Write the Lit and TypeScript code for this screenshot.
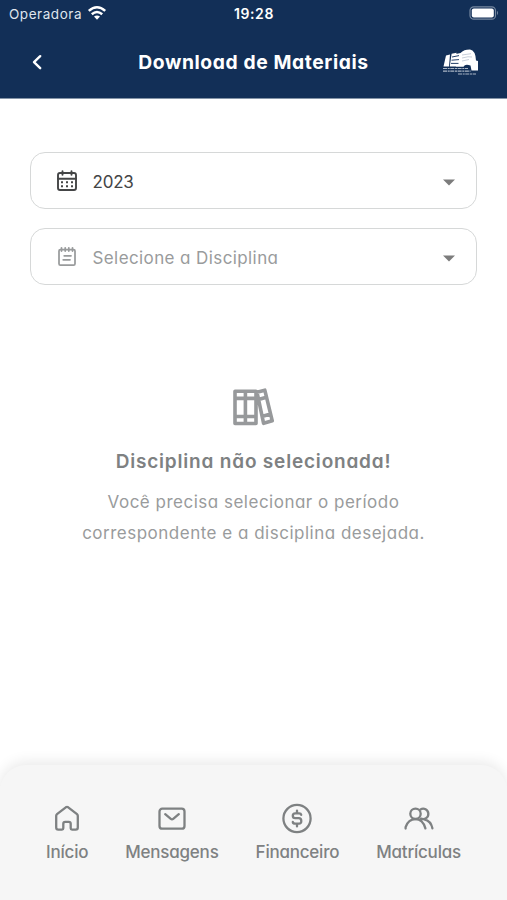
import { LitElement, html, css, svg } from "lit";
import { customElement, property } from "lit/decorators.js";

const icons = {
  calendar: svg`<g fill="none" stroke="#444546" stroke-width="1.9" stroke-linecap="round" stroke-linejoin="round">
    <rect x="2" y="3" width="18" height="17" rx="2"/><path d="M2 8.8H20M6.5 1.2V4.8M15.5 1.2V4.8"/></g>
    <path fill="#444546" d="M5 11.3h2v1.9h-2zM10 11.3h2v1.9h-2zM15 11.3h2v1.9h-2zM5 15.3h2v1.9h-2zM10 15.3h2v1.9h-2zM15 15.3h2v1.9h-2z"/>`,
  notes: svg`<g fill="none" stroke="#999b9c" stroke-width="1.75" stroke-linecap="round" stroke-linejoin="round">
    <rect x="3" y="3.6" width="16" height="15.6" rx="1.4"/><path d="M5.5 1.8V5M9.2 1.8V5M12.8 1.8V5M16.5 1.8V5M8.2 9.8H15M7.2 13.8H14"/></g>`,
};

@customElement("select-field")
export class SelectField extends LitElement {
  @property() icon: "calendar" | "notes" = "calendar";
  @property() text = "";
  @property({ type: Boolean }) placeholder = false;
  static styles = css`
    :host { display: block; }
    .field { box-sizing: border-box; height: 57px; border: 1.5px solid #d6d8d8; border-radius: 15px; display: flex; align-items: center; padding: 0 21px 0 25px; }
    .icon { width: 22px; height: 22px; margin-right: 14.5px; flex: none; }
    .value { flex: 1; font-size: 17px; line-height: 24px; color: #444546; padding-top: 3px; letter-spacing: -0.2px; }
    .hint { color: #999b9c; letter-spacing: 0.4px; }
    .arrow { width: 12px; height: 7px; margin-top: 3px; }
  `;
  render() {
    return html`<div class="field">
      <svg class="icon" viewBox="0 0 22 22">${icons[this.icon]}</svg>
      <span class="value ${this.placeholder ? "hint" : ""}">${this.text}</span>
      <svg class="arrow" viewBox="0 0 12 7"><path d="M0 .5H12L6 6.5Z" fill="#7c7c7c"/></svg>
    </div>`;
  }
}

const tabs = [
  { id: "home", label: "Início", icon: svg`<path d="M4.2 11.8Q4.2 10.8 5 10.1L13.8 3.3Q15 2.5 16.2 3.3L25 10.1Q25.8 10.8 25.8 11.8V23.5Q25.8 25.6 23.7 25.6H20Q18.7 25.6 18.7 24.3V19.7Q18.7 17.8 16.8 17.8H13.2Q11.3 17.8 11.3 19.7V24.3Q11.3 25.6 10 25.6H6.3Q4.2 25.6 4.2 23.5Z"/>` },
  { id: "mail", label: "Mensagens", icon: svg`<rect x="2.5" y="4.7" width="25" height="20" rx="2.8"/><path d="M8.2 10.2L13.8 14.9Q15 15.9 16.2 14.9L21.8 10.2"/>` },
  { id: "money", label: "Financeiro", icon: svg`<circle cx="15" cy="14.5" r="13.6"/><path d="M19.2 10.8Q18.9 9.3 17.2 9.3H13.2Q10.8 9.3 10.8 11.7T13.2 14.2H16.8Q19.3 14.2 19.3 17T16.8 19.6H13.2Q11 19.6 10.8 18M15 6.6V9.3M15 19.6V22.4"/>` },
  { id: "people", label: "Matrículas", icon: svg`<circle cx="11.5" cy="9.8" r="5.2"/><path d="M1.6 24.5V23.2Q4.3 15.2 11.5 15.2T21.4 24.3M16.5 5.4A5.2 5.2 0 1 1 17 14.6M20.2 15.3Q27 16.8 28.4 24.3"/>` },
];

@customElement("app-root")
export class AppRoot extends LitElement {
  static styles = css`
    :host { display: flex; flex-direction: column; height: 900px; width: 507px; overflow: hidden; background: #fff; font-family: Inter, "Open Sans", sans-serif; font-feature-settings: "cv11"; }
    svg { display: block; overflow: visible; }
    header { height: 99px; background: #122f57; color: #fff; flex: none; border-bottom: 1px solid #8494a7; box-sizing: border-box; }
    .status { height: 27px; display: grid; grid-template-columns: 1fr auto 1fr; align-items: center; padding: 0 8px 0 9px; font-feature-settings: normal; }
    .carrier { display: flex; align-items: center; gap: 6px; font-size: 13.5px; letter-spacing: 0.55px; color: #dfe5ed; }
    .wifi { width: 18px; height: 14px; margin-top: -2px; }
    .time { font-size: 14px; font-weight: 600; letter-spacing: 0.6px; }
    .battery { width: 30px; height: 14px; justify-self: end; margin-top: -1px; }
    .bar { height: 70px; display: grid; grid-template-columns: 60px 1fr 60px; align-items: center; padding: 0 28px; }
    .back { width: 18px; height: 18px; }
    .title { font-size: 19.3px; line-height: 26px; font-weight: 700; text-align: center; white-space: nowrap; letter-spacing: 0.6px; }
    .crest { width: 38px; height: 28px; justify-self: end; }
    main { flex: 1; padding: 53px 30px 0; display: flex; flex-direction: column; gap: 19px; }
    .empty { display: flex; flex-direction: column; align-items: center; text-align: center; padding-top: 84px; }
    .books { width: 42px; height: 38px; margin-right: 2px; }
    .heading { margin: 23px 0 0; font-size: 19px; line-height: 26px; font-weight: 600; color: #7e8182; letter-spacing: 0.81px; }
    .copy { margin: 12px 0 0; font-size: 17px; line-height: 30.5px; color: #999b9c; letter-spacing: 0.5px; }
    nav { height: 135px; box-sizing: border-box; background: #f6f6f6; border-radius: 26px 26px 0 0; box-shadow: 0 -3px 14px rgba(0, 0, 0, 0.09); display: flex; justify-content: center; gap: 37px; padding: 39px 0 0; flex: none; }
    .tab { display: flex; flex-direction: column; align-items: center; gap: 6px; color: #7e8182; font-size: 17px; line-height: 24px; font-weight: 500; letter-spacing: -0.22px; }
    .glyph { width: 30px; height: 30px; fill: none; stroke: #7e8182; stroke-width: 2.3; stroke-linecap: round; stroke-linejoin: round; }
  `;
  render() {
    return html`
      <header>
        <div class="status">
          <div class="carrier"><span>Operadora</span>
            <svg class="wifi" viewBox="0 0 18 14"><g fill="none" stroke="#fff" stroke-width="2.5"><path d="M.8 4.9Q9-2.5 17.2 4.9M3.8 8.3Q9 3.8 14.2 8.3"/></g><path fill="#fff" d="M6 10.6Q9 8.3 12 10.6L9 13.8Z"/></svg>
          </div>
          <div class="time">19:28</div>
          <svg class="battery" viewBox="0 0 30 14"><rect x="1" y=".8" width="25.5" height="12.4" rx="3.8" fill="none" stroke="#7688a0" stroke-width="1.2"/><rect x="2.8" y="2.6" width="22" height="8.8" rx="2" fill="#fff"/><path d="M28 4.8Q30 7 28 9.2Z" fill="#7688a0"/></svg>
        </div>
        <div class="bar">
          <svg class="back" viewBox="0 0 18 18"><path d="M12.2 3.2L6 9.2L12.2 15.2" fill="none" stroke="#fff" stroke-width="2.4" stroke-linecap="round" stroke-linejoin="round"/></svg>
          <div class="title">Download de Materiais</div>
          <svg class="crest" viewBox="0 0 38 28">
            <path fill="#fff" d="M2.5 18.5L5 7.5 9 6.5 8 18.5ZM8.8 18.5L10.6 5.8 15.5 4.8 15 18.5Z"/>
            <path fill="#fff" d="M14.8 6L19.5 5Q23 1.5 29 1.6Q34.5 2.5 35 12.5L37 13V22.5H30.5L29.5 17.5Q24 15.5 22.5 18.8H15Z"/>
            <path d="M11 9L18 7.6M10.5 12.2L18 11.6M10 15.4H17.5" stroke="#24406a" stroke-width="1" fill="none"/>
            <path d="M21 7L30 5.7M21 10Q28 8 31 9M21 13L28 11.5" stroke="#b9c3d0" stroke-width=".8" fill="none"/>
            <path d="M2 20.5H27M2 23.2H29.5M17 26H35" stroke="#aab6c5" stroke-width="1.2" stroke-dasharray="4 .7 2 .6" fill="none"/>
          </svg>
        </div>
      </header>
      <main>
        <select-field icon="calendar" text="2023"></select-field>
        <select-field icon="notes" text="Selecione a Disciplina" placeholder></select-field>
        <section class="empty">
          <svg class="books" viewBox="0 0 42 38"><g fill="none" stroke="#97999b" stroke-width="3.6" stroke-linejoin="round"><path d="M3 3.2H24V35.5H3ZM13.4 3.2V35.5M3 10.4H24M3 28.5H24M25 4.2L32.8 2.2L40.2 32.7L31.6 35.3ZM26.4 11.6L34.5 9.2M30 28.5L38.4 26"/></g></svg>
          <h2 class="heading">Disciplina não selecionada!</h2>
          <p class="copy">Você precisa selecionar o período<br />correspondente e a disciplina desejada.</p>
        </section>
      </main>
      <nav>${tabs.map((t) => html`<div class="tab"><svg class="glyph" viewBox="0 0 30 30">${t.icon}</svg><span>${t.label}</span></div>`)}</nav>
    `;
  }
}
